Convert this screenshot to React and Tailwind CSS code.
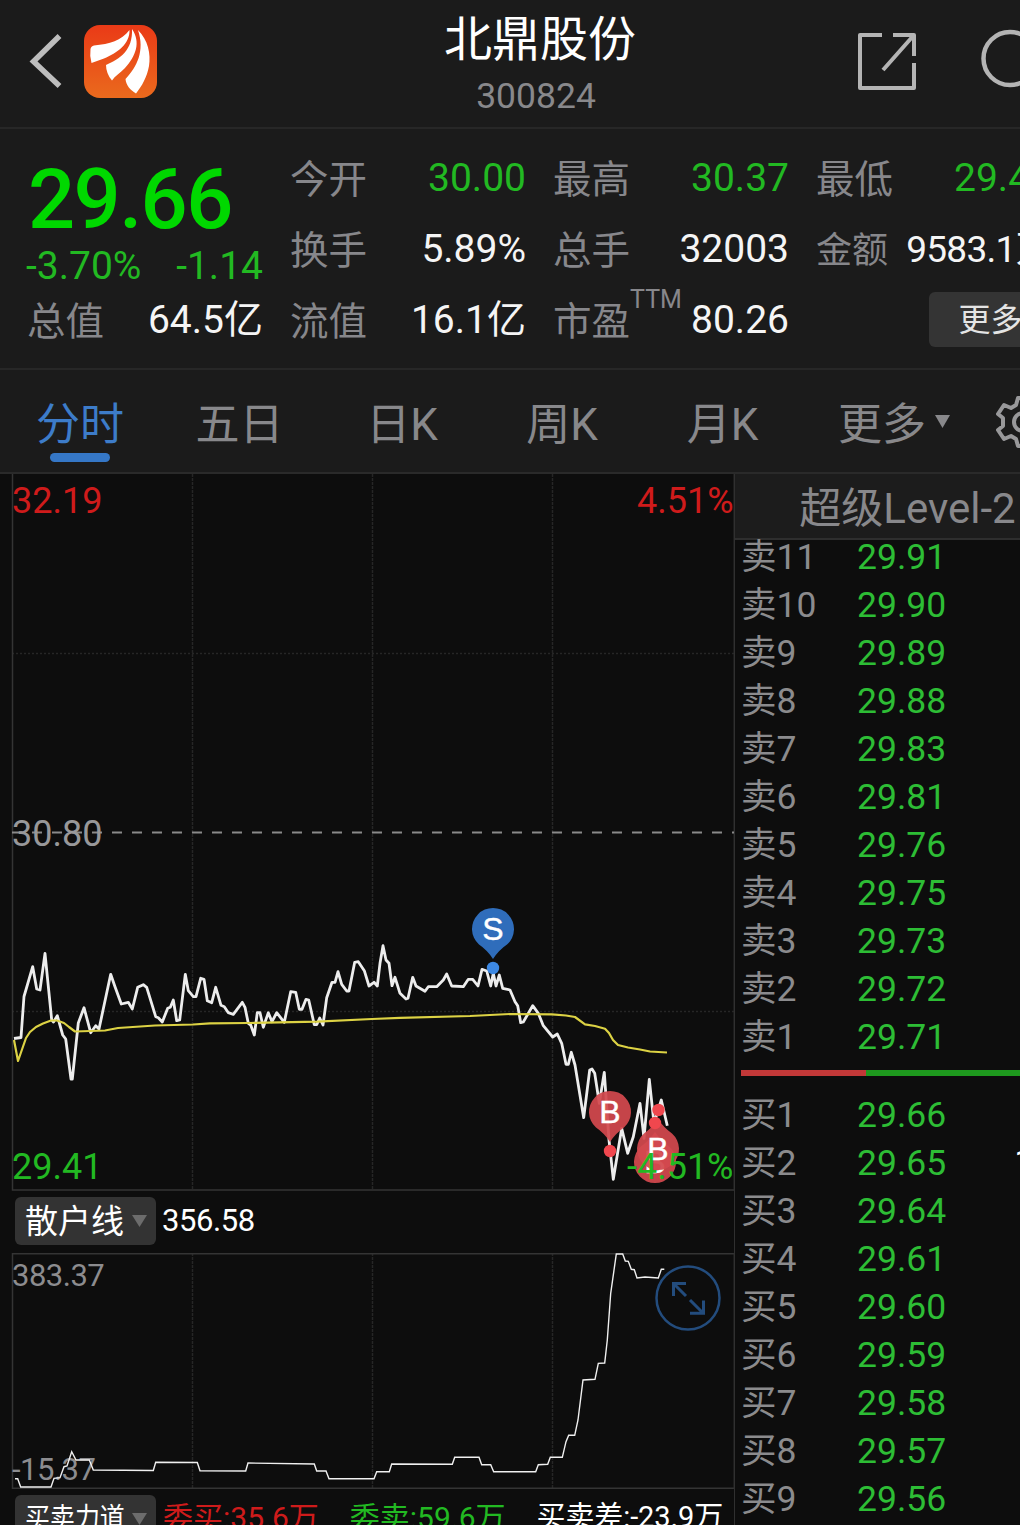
import React from "react";

const SELL_ORDERS = [
    { label: "卖11", price: "29.91" },
    { label: "卖10", price: "29.90" },
    { label: "卖9", price: "29.89" },
    { label: "卖8", price: "29.88" },
    { label: "卖7", price: "29.83" },
    { label: "卖6", price: "29.81" },
    { label: "卖5", price: "29.76" },
    { label: "卖4", price: "29.75" },
    { label: "卖3", price: "29.73" },
    { label: "卖2", price: "29.72" },
    { label: "卖1", price: "29.71" },
];

const BUY_ORDERS = [
    { label: "买1", price: "29.66" },
    { label: "买2", price: "29.65", volume: "100" },
    { label: "买3", price: "29.64" },
    { label: "买4", price: "29.61" },
    { label: "买5", price: "29.60" },
    { label: "买6", price: "29.59" },
    { label: "买7", price: "29.58" },
    { label: "买8", price: "29.57" },
    { label: "买9", price: "29.56" },
];

const PRICE_LINE =
    "14,1038.5 21,1037.5 24,996.5 32.7,966.7 36.7,989 40,990 45,953.5 51.7,1020 53.5,1022 57.3,1015.7 62.7,1035 65.7,1039 71,1079 72.3,1079 78.3,1023 84,1007.7 90.7,1032.7 95.7,1025.7 99,1029 110.7,974.3 115,986.7 121.3,1004 128.3,1002.3 132.3,1009 137.7,987.3 143.3,984.7 146.7,987.3 155.7,1016.7 158.3,1017.7 162.3,1022 167.7,1008.3 170.3,1007.3 173.3,1000 176.7,1020.7 179.7,1020 185.3,974.3 188.3,990.7 193.3,996.7 196,996.7 200.7,978.3 204,979.3 207.3,1000.7 211.7,1002.7 215.7,987.3 221,1005.3 224.3,1006.7 228.3,1012.7 233.3,1014.3 242.3,1002.3 245,1007.3 248.3,1023.3 250.7,1025 254.3,1035 257.3,1012.7 260,1012.7 263.3,1027.3 268.3,1012.7 272,1021.7 276.7,1012.7 284.3,1022.3 290.7,991.7 295.7,992.3 299.3,1009.3 302,1009.3 306,999.3 308.7,1000 314.3,1024.7 316.7,1024.7 319.7,1018 323,1025 326.7,997.7 332,982.3 335,982.3 338,971.7 341.7,984.3 346.7,991 349,991 354.7,962.3 358.3,961.7 364.3,970.7 369,986 374,982.3 377.3,986 380,963.3 383,945.7 386,960 389,963.3 392,985.7 395,977.3 400,993.3 406,999 408,998.3 412.7,977.3 416,986 425,991.3 428.3,986.7 436.7,986.7 443.3,980 446.7,974 451.7,986 463.3,986.7 468.3,979.3 472.7,979.3 478,986 482,969.3 486.7,971 490.7,986 493.3,973.3 496,986 499.3,975 502.7,988.3 510,990 515,1001.7 517.7,1005.7 520.7,1022.7 523.3,1022 532.7,1005.7 538.3,1013.3 543.3,1025.7 552.7,1037 557.3,1034 561.7,1043.3 566,1064.3 568.3,1064.3 571.3,1052.3 575,1065 583.7,1117.7 589.7,1070 592,1069 594.7,1073.3 599.3,1103.3 604.3,1072.3 609,1140 613.3,1179.3 621.7,1128.3 627.7,1153.3 633.3,1136.7 640,1103.3 644,1138.3 649.3,1079.3 654,1123.3 661.3,1100 667.3,1125.7";

const AVERAGE_LINE =
    "14,1040 18,1061 26,1038 30,1032 36,1027 43,1023.5 51,1020.5 57,1020.5 64,1023 69,1027 75,1031.500 90,1031 105,1030.5 118,1028 155,1025.5 193,1024.5 210,1023.3 248,1023 317,1021.7 372,1019 400,1017.8 470,1016 510,1014 552,1014.3 566,1015.500 575,1017 585,1024.3 595,1026 605,1028.7 609,1033 613,1040 618,1045 628,1047.500 640,1049.500 650,1051.5 667,1052.5";

const RETAIL_LINE =
    "15,1478.7 17.7,1478.7 20.7,1487 51,1487 54,1478.3 60,1477.7 64,1466.7 67,1466 71.7,1451.7 76,1460 89.3,1460 93.3,1470 153.3,1470.5 155.7,1462.3 197.3,1462.5 200,1470.7 245.7,1471 248,1463 314.3,1464 316.7,1471 326,1471 329,1478.7 374,1478.7 376.7,1471.7 389.3,1471.7 391.7,1464 452.3,1464.3 454.7,1457.3 479,1457.3 481.7,1464.7 490.7,1464.7 493.7,1471.7 535.7,1471.7 538.3,1464.7 547.7,1464.3 550.3,1457.3 562.3,1457.3 566,1441.7 568.7,1435.3 574.7,1435.3 578,1420 583,1380 595,1379.3 598.3,1363.3 604.7,1363 607.3,1340 610.7,1293.3 616.3,1254 622.7,1254 625.3,1261 628.3,1261.3 631.3,1269.3 634.3,1269.7 637,1278 645,1277 658.3,1278 661.3,1269.3 664.3,1269.3";

function Stat({ label, sup, value, green, small }) {
    return (
        <div className="flex h-[71px] items-center justify-between whitespace-nowrap">
            <span className={`relative -ml-px pt-[3px] text-[#87878b] ${small ? "text-[36px]" : "text-[38.5px]"}`}>
                {label}
                {sup && <sup className="absolute left-full top-[-3px] text-[25px] leading-none">{sup}</sup>}
            </span>
            <span className={`${small ? "text-[37px] tracking-[-0.7px]" : "text-[39px]"} ${green ? "text-[#22b922]" : "text-[#f5f5f5]"}`}>
                {value}
            </span>
        </div>
    );
}

function Header() {
    return (
        <header className="flex h-[129px] items-start justify-between border-b-2 border-[#272727] bg-[#1b1b1b]">
            <div className="flex w-[300px] items-center gap-[22px] pl-[29px] pt-[25px]">
                <svg className="h-[56px] w-[33px]" viewBox="0 0 33 56" fill="none" stroke="#bdbdbd" strokeWidth="5.5">
                    <path d="M30.5 2 L4.5 27.5 L30.5 52" />
                </svg>
                <svg className="h-[73px] w-[73px]" viewBox="0 0 73 73">
                    <defs>
                        <linearGradient id="logo" x1="0" y1="0" x2="0" y2="1">
                            <stop offset="0" stopColor="#ea3a17" />
                            <stop offset="1" stopColor="#ea6a1d" />
                        </linearGradient>
                    </defs>
                    <rect width="73" height="73" rx="16" fill="url(#logo)" />
                    <g fill="#fff">
                        <path d="M6.500 24 Q7 21 10 20.500 C26 19 37 16 45.500 5 C46 19 33 28 20 33.500 L7.500 38 Q5.500 31 6.500 24Z" />
                        <path d="M48 4 C57 17 52 31 41 43 C36 48 31 51 28 55.500 C24 51 22 45 22 40 C36 34 49 25 48 4Z" />
                        <path d="M54 5 C64 15 67 29 65 41 C63 52 58 61 52 68.500 C46 65 42 60 41.500 54 C53 42 61 26 54 5Z" />
                    </g>
                </svg>
            </div>
            <div className="flex flex-col items-center pt-[10px]">
                <h1 className="text-[48px] font-normal leading-[60px] text-white">北鼎股份</h1>
                <p className="-ml-2 mt-[5px] text-[35.5px] leading-[42px] text-[#88888b]">300824</p>
            </div>
            <div className="flex w-[300px] justify-end gap-[63px] pr-[36px] pt-[29px]">
                <svg className="h-[62px] w-[60px]" viewBox="0 0 60 62" fill="none" stroke="#b4b4b4" strokeWidth="4" strokeLinejoin="round">
                    <path d="M25 6 H3 V59 H57 V34 M36 6 H57 V27 M57 6 L26 41" />
                </svg>
                <svg className="h-[66px] w-[64px]" viewBox="0 0 64 66" fill="none" stroke="#b4b4b4" strokeWidth="4.5">
                    <circle cx="30" cy="29.500" r="26.500" />
                    <path d="M49 48 L62 62" />
                </svg>
            </div>
        </header>
    );
}

function Quote() {
    return (
        <section className="grid h-[241px] grid-cols-4 gap-x-[28px] border-b-2 border-[#272727] bg-[#1b1b1b] px-[28px] pt-[14px]">
            <div>
                <div className="flex h-[106px] items-center pt-[6px] text-[83px] font-medium leading-none tracking-[-1.6px] text-[#00d800]">29.66</div>
                <div className="-ml-[2px] flex h-[36px] items-center justify-between pb-px text-[39px] text-[#22b922]">
                    <span>-3.70%</span>
                    <span>-1.14</span>
                </div>
                <Stat label="总值" value="64.5亿" />
            </div>
            <div>
                <Stat label="今开" value="30.00" green />
                <Stat label="换手" value="5.89%" />
                <Stat label="流值" value="16.1亿" />
            </div>
            <div>
                <Stat label="最高" value="30.37" green />
                <Stat label="总手" value="32003" />
                <Stat label="市盈" sup="TTM" value="80.26" />
            </div>
            <div>
                <Stat label="最低" value="29.41" green />
                <Stat label="金额" value="9583.1万" small />
                <div className="flex h-[71px] items-center justify-end pb-[2px]">
                    <button className="h-[55px] w-[123px] rounded-md bg-[#343434] text-[32px] leading-none text-[#e4e4e4]">更多</button>
                </div>
            </div>
        </section>
    );
}

function Tabs() {
    return (
        <nav className="flex h-[104px] items-start border-b-2 border-[#2a2a2a] bg-[#1b1b1b] text-[44px] leading-[64px] text-[#88888b]">
            <div className="flex w-[160px] flex-col items-center pt-[23px] text-[#3d7cc9]">
                分时
                <span className="-mt-[4px] h-[9px] w-[60px] rounded-full bg-[#3577c6]" />
            </div>
            <div className="w-[159px] pt-[23px] text-center">五日</div>
            <div className="w-[166px] pt-[23px] text-center">日K</div>
            <div className="w-[154px] pt-[23px] text-center">周K</div>
            <div className="w-[167px] pt-[23px] text-center">月K</div>
            <div className="flex w-[187px] items-center gap-[9px] pl-[32px] pt-[23px]">
                更多
                <svg className="-mt-[8px] h-[13px] w-[15px]" viewBox="0 0 15 13" fill="#88888b">
                    <path d="M0 0 H15 L7.500 13Z" />
                </svg>
            </div>
            <svg className="mt-[26px] h-[52px] w-[60px]" viewBox="-30 -26 60 52" fill="none" stroke="#98989a" strokeWidth="4" strokeLinejoin="round">
                <path d="M-5 -24 H5 L7 -17 L12 -14 L19 -17 L25 -8 L20 -4 V4 L25 8 L19 17 L12 14 L7 17 L5 24 H-5 L-7 17 L-12 14 L-19 17 L-25 8 L-20 4 V-4 L-25 -8 L-19 -17 L-12 -14 L-7 -17Z" />
                <circle r="9" />
            </svg>
        </nav>
    );
}

function Pin({ x, y, letter, fill, up }) {
    return (
        <g transform={`translate(${x} ${y})`}>
            <path
                d="M-14 15.600 A21 21 0 1 1 14 15.600 Q6 21 0 30 Q-6 21 -14 15.600Z"
                fill={fill}
                transform={up ? "scale(1 -1)" : undefined}
            />
            <text y="11" fill="#fff" fontSize="32" fontFamily="Liberation Sans, sans-serif" stroke="#fff" strokeWidth="0.4" textAnchor="middle">
                {letter}
            </text>
        </g>
    );
}

function PriceChart() {
    return (
        <svg className="block h-[717px] w-[735px]" viewBox="0 474 735 717" fill="none">
            <g stroke="#262626" strokeWidth="1.5">
                <path d="M192.500 474 V1190 M372.500 474 V1190 M552.500 474 V1190" strokeDasharray="3 1" />
                <path d="M12 653.500 H734 M12 1011.500 H734" strokeDasharray="2 2" />
            </g>
            <path d="M12.500 474 V1190 H734" stroke="#343434" strokeWidth="1.5" />
            <path d="M734.300 474 V1191" stroke="#303030" strokeWidth="1.5" />
            <path d="M12 832.500 H734" stroke="#8a8a8a" strokeWidth="2" strokeDasharray="10 10" />
            <polyline points={PRICE_LINE} stroke="#ededed" strokeWidth="2.800" strokeLinejoin="round" />
            <polyline points={AVERAGE_LINE} stroke="#dcd244" strokeWidth="2.200" strokeLinejoin="round" />
            <Pin x={493} y={929} letter="S" fill="#2f6dbb" />
            <circle cx="493" cy="968" r="6.200" fill="#3d88e2" />
            <Pin x={610} y={1112} letter="B" fill="#d3494eee" />
            <circle cx="610" cy="1151" r="6.200" fill="#f0474e" />
            <Pin x={655} y={1162} letter="B" fill="#d3494eee" up />
            <Pin x={658} y={1149} letter="B" fill="#d3494eee" up />
            <circle cx="655" cy="1123" r="6.200" fill="#f0474e" />
            <circle cx="658.500" cy="1110" r="6.200" fill="#f0474e" />
            <g fontSize="36">
                <text x="12" y="513" fill="#cf1b1b">32.19</text>
                <text x="733.500" y="513" fill="#cf1b1b" textAnchor="end">4.51%</text>
                <text x="12" y="846" fill="#98989a">30.80</text>
                <text x="12" y="1179" fill="#22b922">29.41</text>
                <text x="733.500" y="1179" fill="#22b922" textAnchor="end">-4.51%</text>
            </g>
        </svg>
    );
}

function IndicatorButton({ children }) {
    return (
        <button className="flex h-[48px] w-[141px] shrink-0 items-center justify-between rounded-md bg-[#333333] pl-[10px] pr-[9px] leading-none text-white">
            {children}
            <svg className="h-[12px] w-[15px]" viewBox="0 0 15 12" fill="#6c6c6c">
                <path d="M0 0 H15 L7.500 12Z" />
            </svg>
        </button>
    );
}

function RetailChart() {
    return (
        <svg className="block h-[236px] w-[735px]" viewBox="0 1253 735 236" fill="none">
            <path d="M192.500 1253 V1488 M372.500 1253 V1488 M552.500 1253 V1488" stroke="#262626" strokeWidth="1.5" strokeDasharray="3 1" />
            <path d="M734 1253.800 H12.500 V1488.200 H734" stroke="#343434" strokeWidth="1.5" />
            <path d="M734.300 1253 V1489" stroke="#303030" strokeWidth="1.5" />
            <g fill="#8c8c8f" fontSize="31" letterSpacing="-0.5">
                <text x="12" y="1286">383.37</text>
                <text x="12" y="1480">-15.37</text>
            </g>
            <polyline points={RETAIL_LINE} stroke="#f0f0f0" strokeWidth="1.400" />
            <g stroke="#234c7d" strokeWidth="2.500">
                <circle cx="688" cy="1298" r="31.500" />
                <path d="M686 1296 L674 1284 M673.500 1296 V1283.500 H686" strokeWidth="3" />
                <path d="M690 1300 L703 1313 M703.500 1300.500 V1313.200 H690" strokeWidth="3" />
            </g>
        </svg>
    );
}

function OrderRow({ label, price, volume }) {
    return (
        <div className="flex h-12 items-center text-[35.5px]">
            <span className="-ml-px w-[116px] pt-[2px] text-[#8b8b8d]">{label}</span>
            <span className="pt-[2px] text-[#2dbd35]">{price}</span>
            {volume && <span className="ml-auto pr-[6px] text-white">{volume}</span>}
        </div>
    );
}

function OrderBook() {
    return (
        <aside className="w-[345px]">
            <h2 className="flex h-[66px] items-center justify-center border-b-2 border-[#2e2e2e] bg-[#1c1c1c] pt-[6px] text-[42px] font-normal leading-none text-[#88888b]">
                超级Level-2
            </h2>
            <div className="-mt-[7px] pl-[7px]">
                {SELL_ORDERS.map((order) => (
                    <OrderRow key={order.label} {...order} />
                ))}
            </div>
            <div className="my-[9px] ml-[6px] flex h-[6px]">
                <span className="w-[125px] bg-[#c23838]" />
                <span className="flex-1 bg-[#1e991e]" />
            </div>
            <div className="pl-[7px] pt-[6px]">
                {BUY_ORDERS.map((order) => (
                    <OrderRow key={order.label} {...order} />
                ))}
            </div>
        </aside>
    );
}

function App() {
    return (
        <div className="h-[1525px] w-full overflow-hidden bg-[#0d0d0d] font-['Roboto','Noto_Sans_CJK_SC',sans-serif]">
            <div className="w-[1080px]">
                <Header />
                <Quote />
                <Tabs />
                <main className="flex">
                    <div className="w-[735px] shrink-0">
                        <PriceChart />
                        <div className="flex h-[62px] items-center gap-[6px] border-r border-[#303030] pb-[2px] pl-[15px] text-[33px]">
                            <IndicatorButton>散户线</IndicatorButton>
                            <span className="text-[31px] tracking-[-0.4px] text-white">356.58</span>
                        </div>
                        <RetailChart />
                        <div className="flex h-[62px] items-center whitespace-nowrap border-r border-[#303030] pb-[2px] pl-[15px] text-[30px]">
                            <IndicatorButton>
                                <span className="-mr-[20px] origin-left scale-x-[0.86] text-[29px]">买卖力道</span>
                            </IndicatorButton>
                            <span className="ml-[7px] pb-[3px] text-[#cf1b1b]">委买:35.6万</span>
                            <span className="ml-[31px] pb-[3px] text-[#22b922]">委卖:59.6万</span>
                            <span className="ml-[31px] pb-[3px] text-[29px] tracking-[-0.1px] text-white">买卖差:-23.9万</span>
                        </div>
                    </div>
                    <OrderBook />
                </main>
            </div>
        </div>
    );
}

export default App;
